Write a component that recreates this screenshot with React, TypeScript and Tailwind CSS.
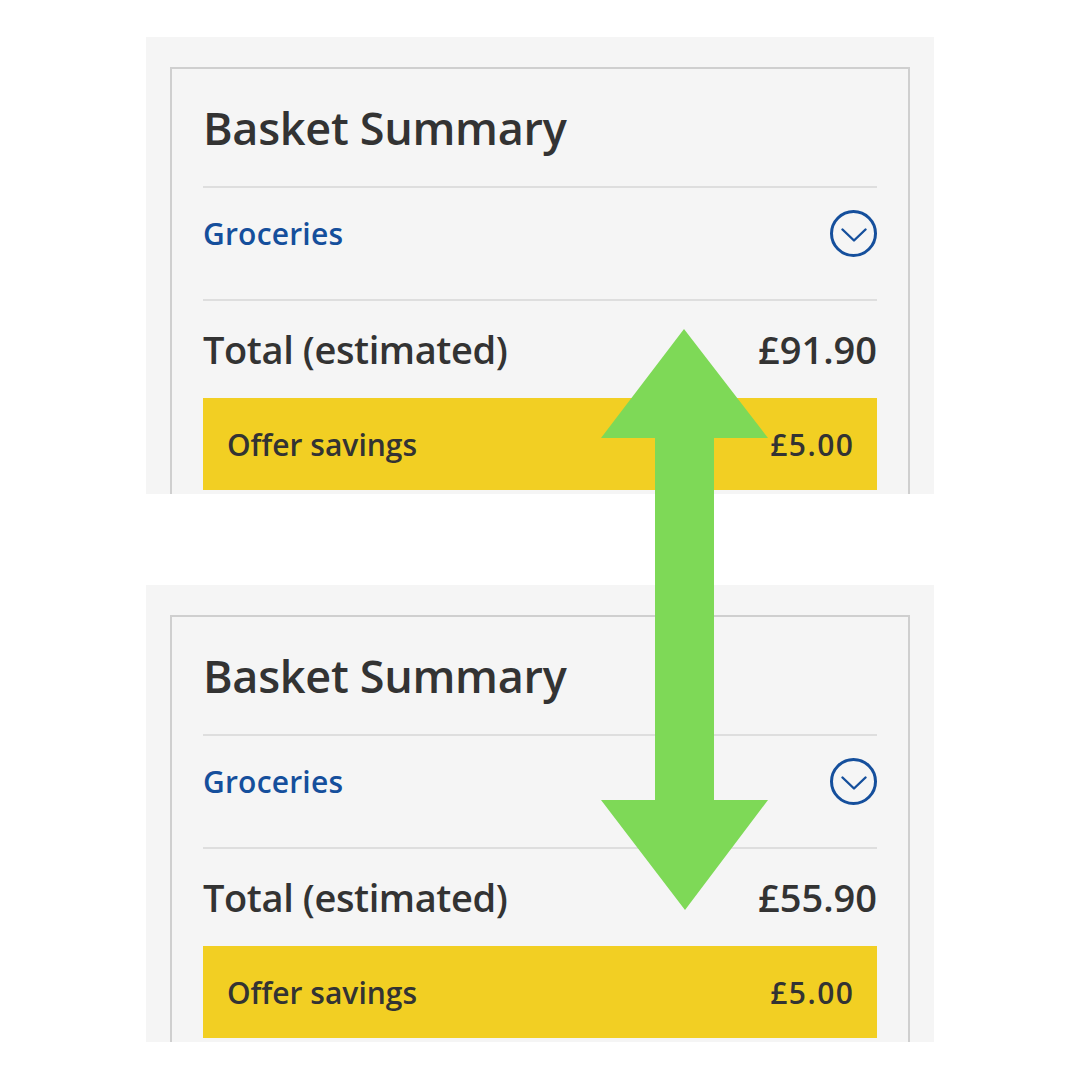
const font = { fontFamily: '"Open Sans", Lato, sans-serif' };

function ChevronCircle() {
  return (
    <div className="w-[47px] h-[47px] rounded-full border-[3px] border-[#154f9c] flex items-center justify-center">
      <svg width="26" height="14" viewBox="0 0 26 14" fill="none" className="mt-[3px]">
        <polyline points="1.5,1.5 13,12.5 24.5,1.5" stroke="#154f9c" strokeWidth="2.4" strokeLinecap="round" strokeLinejoin="round" />
      </svg>
    </div>
  );
}

function BasketPanel({ total }: { total: string }) {
  return (
    <div className="w-[788px] h-[457px] bg-[#f5f5f5] overflow-hidden pl-[24px] pr-[24px] pt-[30px]">
      <div className="border-2 border-[#cfcfcf] h-[500px] px-[31px]">
        {/* Title */}
        <div className="h-[117px] flex items-center">
          <h2 className="text-[45px] leading-none font-semibold text-[#333333] tracking-[-0.3px]">Basket Summary</h2>
        </div>
        <div className="h-[2px] bg-[#dedede]" />

        {/* Groceries accordion */}
        <div className="flex items-center justify-between pt-[22px] pb-[42px]">
          <span className="text-[30px] leading-none font-semibold text-[#154f9c] tracking-[0.2px]">Groceries</span>
          <ChevronCircle />
        </div>
        <div className="h-[2px] bg-[#dedede]" />

        {/* Total */}
        <div className="h-[97px] flex items-center justify-between">
          <span className="text-[38px] font-semibold text-[#333333] tracking-[-0.4px]">Total (estimated)</span>
          <span className="text-[38px] font-semibold text-[#333333]">{total}</span>
        </div>

        {/* Offer savings */}
        <div className="h-[92px] bg-[#f2cf23] flex items-center justify-between px-[24px]">
          <span className="text-[30px] font-semibold text-[#333333]">Offer savings</span>
          <span className="text-[30px] font-semibold text-[#333333] tracking-[1.5px] -mr-[1.5px]">£5.00</span>
        </div>
      </div>
    </div>
  );
}

export default function App() {
  return (
    <div className="relative w-[1080px] h-[1080px] bg-white" style={font}>
      <div className="pl-[146px] pt-[37px] flex flex-col gap-[91px]">
        <BasketPanel total="£91.90" />
        <BasketPanel total="£55.90" />
      </div>

      {/* Annotation arrow */}
      <svg className="absolute left-[600px] top-[328px]" width="170" height="584" viewBox="0 0 170 584">
        <polygon
          fill="#7ed957"
          points="84,1 168,110 114,110 114,472 168,472 85,582 1,472 55,472 55,110 1,110"
        />
      </svg>
    </div>
  );
}
